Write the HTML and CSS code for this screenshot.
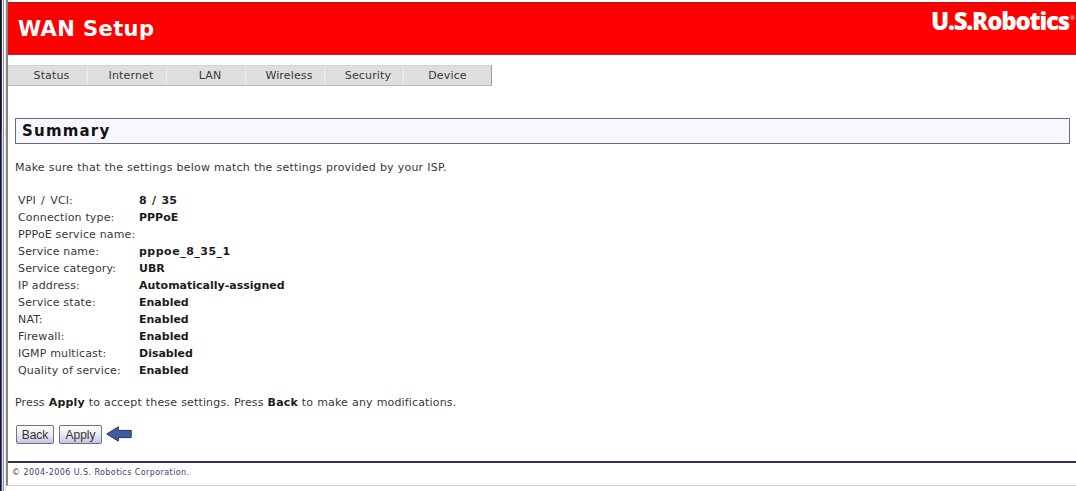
FILE: index.html
```html
<!DOCTYPE html>
<html lang="en">
<head>
<meta charset="utf-8">
<title>WAN Setup</title>
<link rel="stylesheet" href="styles.css">
</head>
<body>
<div class="edge"><i class="edge-upper"></i><i class="edge-lower"></i></div>
<div class="frame">
  <header class="banner">
    <h1>WAN Setup</h1>
    <div class="logo"><span>U.S.Robotics</span><i>®</i></div>
  </header>
  <nav class="menu">
    <a>Status</a><a>Internet</a><a>LAN</a><a>Wireless</a><a>Security</a><a>Device</a>
  </nav>
  <main class="content">
    <h2>Summary</h2>
    <p class="intro">Make sure that the settings below match the settings provided by your ISP.</p>
    <dl class="settings">
      <dt class="spaced">VPI / VCI:</dt><dd class="spaced">8 / 35</dd>
      <dt>Connection type:</dt><dd>PPPoE</dd>
      <dt>PPPoE service name:</dt><dd></dd>
      <dt>Service name:</dt><dd class="identifier">pppoe_8_35_1</dd>
      <dt>Service category:</dt><dd>UBR</dd>
      <dt>IP address:</dt><dd>Automatically-assigned</dd>
      <dt>Service state:</dt><dd>Enabled</dd>
      <dt>NAT:</dt><dd>Enabled</dd>
      <dt>Firewall:</dt><dd>Enabled</dd>
      <dt>IGMP multicast:</dt><dd>Disabled</dd>
      <dt>Quality of service:</dt><dd>Enabled</dd>
    </dl>
    <p class="hint">Press <b>Apply</b> to accept these settings. Press <b>Back</b> to make any modifications.</p>
    <div class="actions">
      <button class="back">Back</button>
      <button class="apply">Apply</button>
      <svg class="arrow" width="26" height="16" viewBox="0 0 26 16"><path d="M.8 8 12.3.8V4.4H25.2V11.6H12.3V15.2Z" fill="#405d9b" stroke="#24345f"/></svg>
    </div>
  </main>
  <footer class="legal">© 2004-2006 U.S. Robotics Corporation.</footer>
</div>
</body>
</html>
```
FILE: styles.css
```css
* { box-sizing: border-box; }
body {
  margin: 0;
  height: 491px;
  overflow: hidden;
  display: flex;
  background: #fff;
  color: #383838;
  font: 11px/17px Verdana, "DejaVu Sans", sans-serif;
}
h1, h2, p, dl, dd { margin: 0; }
.edge { width: 6px; flex: none; display: flex; flex-direction: column; border-right: 1px solid #e4e4e4; }
.edge-upper { height: 130px; width: 4px; background: linear-gradient(90deg, #14141c 1px, #33333f 1px 2px, #f4f4f8 2px 3px, #8c8cac 3px); }
.edge-lower { flex: 1; width: 4px; background: linear-gradient(90deg, #14142c 1px, #46507c 1px 2px, #e0e0ec 2px 3px, #8c8cac 3px); }
.frame {
  width: 1070px;
  flex: none;
  height: 486px;
  padding-top: 2px;
  border-left: 2px solid #858585;
  border-bottom: 1px solid #d0d0d0;
}
.banner {
  height: 53px;
  display: flex;
  justify-content: space-between;
  background: #fe0000;
  border-top: 1px solid #a02020;
  border-bottom: 1px solid #b02a2a;
  color: #fff;
}
h1 { padding: 13px 0 0 10px; font-size: 21px; line-height: 26px; letter-spacing: .4px; }
.logo { display: flex; padding: 4px 1px 0 0; font: 800 24px/28px "Open Sans", sans-serif; }
.logo span { width: 139px; letter-spacing: -1.2px; white-space: nowrap; }
.logo i { font: 6px/8px "Open Sans", sans-serif; padding-top: 7px; }
.menu {
  margin-top: 10px;
  width: 484px;
  height: 21px;
  display: flex;
  background: #dedede;
  border: 1px solid #d2d2d2;
  border-right-color: #a0a0a0;
  border-bottom-color: #bcbcbc;
  border-left: 0;
}
.menu a { width: 79px; padding-left: 8px; text-align: center; line-height: 20px; letter-spacing: .15px; border-right: 1px solid #eee; }
.menu a:first-child { width: 80px; }
.menu a:last-child { border: 0; }
.content { padding: 32px 6px 0 7px; }
h2 {
  height: 26px;
  padding-left: 6px;
  border: 1px solid #68688c;
  background: #f6f8fe;
  color: #111;
  font-size: 15px;
  line-height: 24px;
  letter-spacing: 1.2px;
}
.intro { margin-top: 15px; letter-spacing: .2px; word-spacing: .3px; }
.settings { margin: 16px 0 0 3px; display: grid; grid-template-columns: 121px 1fr; grid-auto-rows: 17px; }
.settings dt { letter-spacing: .15px; }
.settings dd, b { font-weight: bold; color: #1c1c1c; }
.settings .spaced { word-spacing: 1.6px; }
.settings .identifier { letter-spacing: .5px; }
.hint { margin-top: 15px; letter-spacing: .16px; word-spacing: .3px; }
.actions { display: flex; margin-top: 14px; height: 20px; padding-left: 1px; }
.actions button {
  height: 19px;
  padding: 0;
  border: 1px solid #69728e;
  border-radius: 2px;
  background: linear-gradient(#fff, #e8e8f2 55%, #c4c4d8);
  color: #333;
  font: 12px/16px "Liberation Sans", sans-serif;
}
.back { width: 38px; margin-right: 5px; }
.apply { width: 43px; margin-right: 4px; }
.arrow { margin-top: 1px; }
.legal {
  margin-top: 16px;
  padding: 1px 0 0 4px;
  border-top: 2px solid #30305c;
  color: #404070;
  font-size: 8px;
  letter-spacing: .42px;
}
```
